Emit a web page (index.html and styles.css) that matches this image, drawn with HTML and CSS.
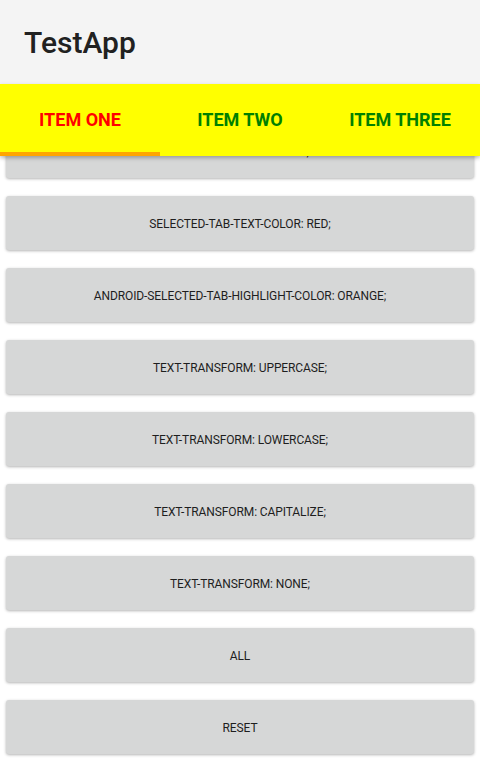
FILE: index.html
```html
<!DOCTYPE html>
<html>
<head>
<meta charset="utf-8">
<link rel="stylesheet" href="styles.css">
</head>
<body>
<div class="app">
  <header class="action-bar"><h1 class="title">TestApp</h1></header>
  <nav class="tabs">
    <div class="tab selected">ITEM ONE</div>
    <div class="tab">ITEM TWO</div>
    <div class="tab">ITEM THREE</div>
  </nav>
  <main class="content">
    <div class="list">
      <button class="btn">TAB-TEXT-COLOR: GREEN;</button>
      <button class="btn">SELECTED-TAB-TEXT-COLOR: RED;</button>
      <button class="btn">ANDROID-SELECTED-TAB-HIGHLIGHT-COLOR: ORANGE;</button>
      <button class="btn">TEXT-TRANSFORM: UPPERCASE;</button>
      <button class="btn">TEXT-TRANSFORM: LOWERCASE;</button>
      <button class="btn">TEXT-TRANSFORM: CAPITALIZE;</button>
      <button class="btn">TEXT-TRANSFORM: NONE;</button>
      <button class="btn">ALL</button>
      <button class="btn">RESET</button>
    </div>
  </main>
</div>
</body>
</html>
```
FILE: styles.css
```css
* { box-sizing: border-box; }
html, body { margin: 0; padding: 0; }
body {
  width: 480px;
  height: 764px;
  overflow: hidden;
  background: #ffffff;
  font-family: Roboto, "Liberation Sans", sans-serif;
}
.app { display: flex; flex-direction: column; height: 764px; }
.action-bar {
  height: 84px;
  background: #f4f4f4;
  display: flex;
  align-items: center;
  padding-left: 24px;
  flex-shrink: 0;
}
.title {
  margin: 0;
  font-size: 30px;
  font-weight: 500;
  color: #212121;
}
.tabs {
  position: relative;
  z-index: 2;
  height: 72px;
  background: #ffff00;
  display: grid;
  grid-template-columns: repeat(3, 1fr);
  box-shadow: 0 2px 4px rgba(0,0,0,0.28);
  flex-shrink: 0;
}
.tab {
  display: flex;
  align-items: center;
  justify-content: center;
  font-size: 18px;
  font-weight: 700;
  color: #008000;
  border-bottom: 4px solid transparent;
  padding-top: 3px;
}
.tab.selected {
  color: #ff0000;
  border-bottom-color: #ffa500;
}
.content { flex: 1; overflow: hidden; }
.list {
  margin-top: -32px;
  padding: 0 6px;
  display: flex;
  flex-direction: column;
  gap: 18px;
}
.btn {
  height: 54px;
  border: none;
  border-radius: 3px;
  background: #d6d7d7;
  box-shadow: 0 1px 3px rgba(0,0,0,0.3);
  font-family: Roboto, "Liberation Sans", sans-serif;
  font-size: 12px;
  letter-spacing: -0.1px;
  color: #1e1e1e;
  padding: 1px 0 0;
}
```
